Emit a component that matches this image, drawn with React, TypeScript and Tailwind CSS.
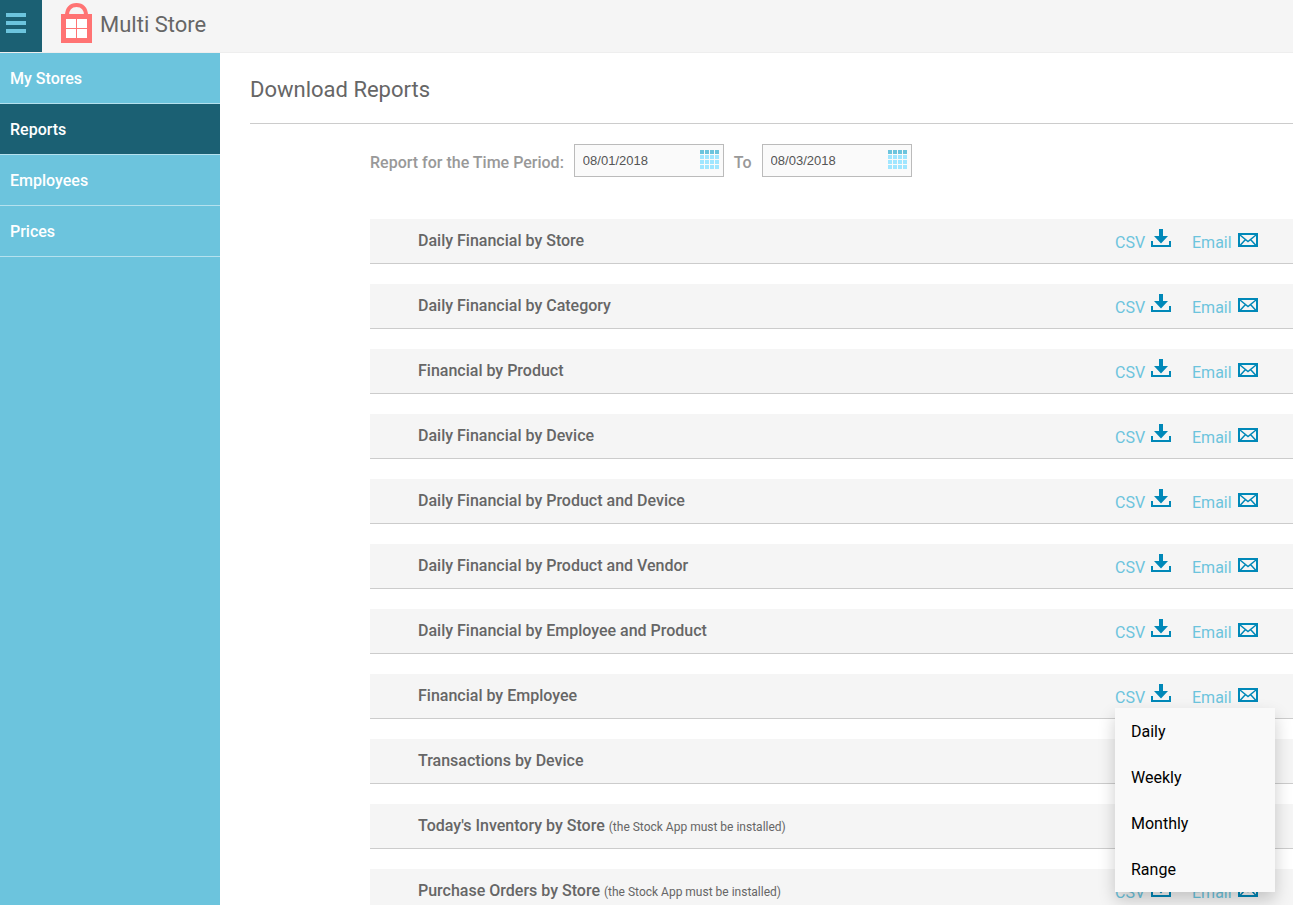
import { useState } from 'react';

interface Report {
  name: string;
  note?: string;
}

interface DateFieldProps {
  id: string;
  label: string;
  value: string;
  onChange: (value: string) => void;
}

interface ReportRowProps {
  report: Report;
  menuOpen: boolean;
  onToggleMenu: () => void;
}

const navItems = ['My Stores', 'Reports', 'Employees', 'Prices'];

const stockNote = '(the Stock App must be installed)';

const reports: Report[] = [
  { name: 'Daily Financial by Store' },
  { name: 'Daily Financial by Category' },
  { name: 'Financial by Product' },
  { name: 'Daily Financial by Device' },
  { name: 'Daily Financial by Product and Device' },
  { name: 'Daily Financial by Product and Vendor' },
  { name: 'Daily Financial by Employee and Product' },
  { name: 'Financial by Employee' },
  { name: 'Transactions by Device' },
  { name: "Today's Inventory by Store", note: stockNote },
  { name: 'Purchase Orders by Store', note: stockNote },
];

const periods = ['Daily', 'Weekly', 'Monthly', 'Range'];

function StoreLogo() {
  return (
    <svg width="31" height="40" viewBox="0 0 31 40" aria-hidden="true">
      <path d="M6 12.5C6 5.5 10 2 15.5 2S25 5.5 25 12.5" fill="none" stroke="#ff7373" strokeWidth="4" />
      <path d="M0 11h31v29H0z" fill="#ff7373" />
      <path d="M5 16h10v9H5zM16 16h10v9H16zM5 26h10v9H5zM16 26h10v9H16z" fill="#fff" />
    </svg>
  );
}

function CalendarIcon() {
  const cells = [0, 5, 10, 15];
  return (
    <svg width="19" height="19" viewBox="0 0 19 19" shapeRendering="crispEdges" aria-hidden="true">
      {cells.map((y) =>
        cells.map((x) => (
          <rect key={`${x}-${y}`} x={x} y={y} width="4" height="4" fill={y === 0 ? '#6cc4dd' : '#a0e6ff'} />
        ))
      )}
    </svg>
  );
}

function DownloadIcon() {
  return (
    <svg width="20" height="18" viewBox="0 0 20 18" fill="#0088b8" aria-hidden="true">
      <path d="M8 0h4v7h5l-7 7.5L3 7h5z" />
      <path d="M0 12h2v4h16v-4h2v6H0z" />
    </svg>
  );
}

function MailIcon() {
  return (
    <svg width="20" height="14" viewBox="0 0 20 14" fill="none" stroke="#0088b8" aria-hidden="true">
      <path d="M1 1h18v12H1z" strokeWidth="2" />
      <path d="M2 2l8 6.5L18 2M2 12.5l5.5-6M18 12.5l-5.5-6" strokeWidth="1.5" />
    </svg>
  );
}

function DateField({ id, label, value, onChange }: DateFieldProps) {
  return (
    <div className="flex h-[33px] w-[150px] items-start border border-[#bbb] bg-[#fafafa] pt-[5px] pr-1">
      <input
        id={id}
        type="text"
        aria-label={label}
        value={value}
        onChange={(e) => onChange(e.target.value)}
        className="min-w-0 flex-1 bg-transparent pl-2 font-['Liberation_Sans',sans-serif] text-[13px] leading-[21px] text-[#555] outline-none"
      />
      <button type="button" aria-label={`Choose ${label.toLowerCase()}`}>
        <CalendarIcon />
      </button>
    </div>
  );
}

function ReportRow({ report, menuOpen, onToggleMenu }: ReportRowProps) {
  return (
    <li className="flex h-[45px] items-start justify-between border-b border-[#ccc] bg-[#f5f5f5] pr-[35px] pl-12">
      <h2 className="pt-2.5 text-base leading-6 font-medium">
        {report.name}
        {report.note && <small className="ml-1 text-xs font-normal">{report.note}</small>}
      </h2>
      <div className="relative flex gap-[21px] pt-2.5 text-base leading-6 text-[#6cc4dd]">
        <button type="button" aria-expanded={menuOpen} onClick={onToggleMenu} className="flex items-start gap-1.5">
          <span className="w-[30px] pt-0.5 text-left">CSV</span>
          <DownloadIcon />
        </button>
        <button type="button" className="flex items-start gap-1.5">
          <span className="w-10 pt-0.5 text-left">Email</span>
          <span className="pt-1">
            <MailIcon />
          </span>
        </button>
        {menuOpen && (
          <ul className="absolute top-[34px] left-0 z-10 w-40 bg-[#f9f9f9] text-black shadow-[0_8px_16px_rgba(0,0,0,0.2)]">
            {periods.map((period) => (
              <li key={period}>
                <a href="#" className="block px-4 pt-3 pb-2.5">
                  {period}
                </a>
              </li>
            ))}
          </ul>
        )}
      </div>
    </li>
  );
}

export default function App() {
  const [from, setFrom] = useState('08/01/2018');
  const [to, setTo] = useState('08/03/2018');
  const [openMenu, setOpenMenu] = useState<string | null>('Financial by Employee');

  return (
    <div className="flex h-screen flex-col bg-white font-['Roboto',sans-serif] text-[#666]">
      <header className="flex h-[53px] shrink-0 border-b border-[#eee] bg-[#f5f5f5]">
        <button type="button" aria-label="Toggle menu" className="flex w-[42px] flex-col gap-1 bg-[#1b6073] px-1.5 pt-[13px]">
          <span className="h-1 w-5 bg-[#6cc4dd]" />
          <span className="h-1 w-5 bg-[#6cc4dd]" />
          <span className="h-1 w-5 bg-[#6cc4dd]" />
        </button>
        <a href="#" className="flex items-start gap-2 pt-[3px] pl-[19px]">
          <StoreLogo />
          <span className="pt-1 text-[22px] leading-9">Multi Store</span>
        </a>
      </header>

      <div className="flex min-h-0 flex-1">
        <nav className="w-[220px] shrink-0 bg-[#6cc4dd]">
          {navItems.map((item) => (
            <a
              key={item}
              href="#"
              className={`block border-b border-[#b5e1ee] px-2.5 pt-3.5 pb-3 text-base leading-6 font-medium text-white ${
                item === 'Reports' ? 'bg-[#1b6073]' : ''
              }`}
            >
              {item}
            </a>
          ))}
        </nav>

        <main className="min-w-0 flex-1 overflow-y-auto pl-[30px] [scrollbar-width:none]">
          <h1 className="border-b border-[#ccc] pt-[21px] pb-[17px] text-[22px] leading-8">Download Reports</h1>

          <div className="pl-[120px]">
            <div className="flex items-center gap-2.5 pt-5 text-[#999]">
              <label htmlFor="from" className="pt-1 font-medium">Report for the Time Period:</label>
              <DateField id="from" label="Start date" value={from} onChange={setFrom} />
              <label htmlFor="to" className="pt-1 font-medium">To</label>
              <DateField id="to" label="End date" value={to} onChange={setTo} />
            </div>

            <ul className="flex flex-col gap-5 pt-[42px]">
              {reports.map((report) => (
                <ReportRow
                  key={report.name}
                  report={report}
                  menuOpen={openMenu === report.name}
                  onToggleMenu={() => setOpenMenu(openMenu === report.name ? null : report.name)}
                />
              ))}
            </ul>
          </div>
        </main>
      </div>
    </div>
  );
}
